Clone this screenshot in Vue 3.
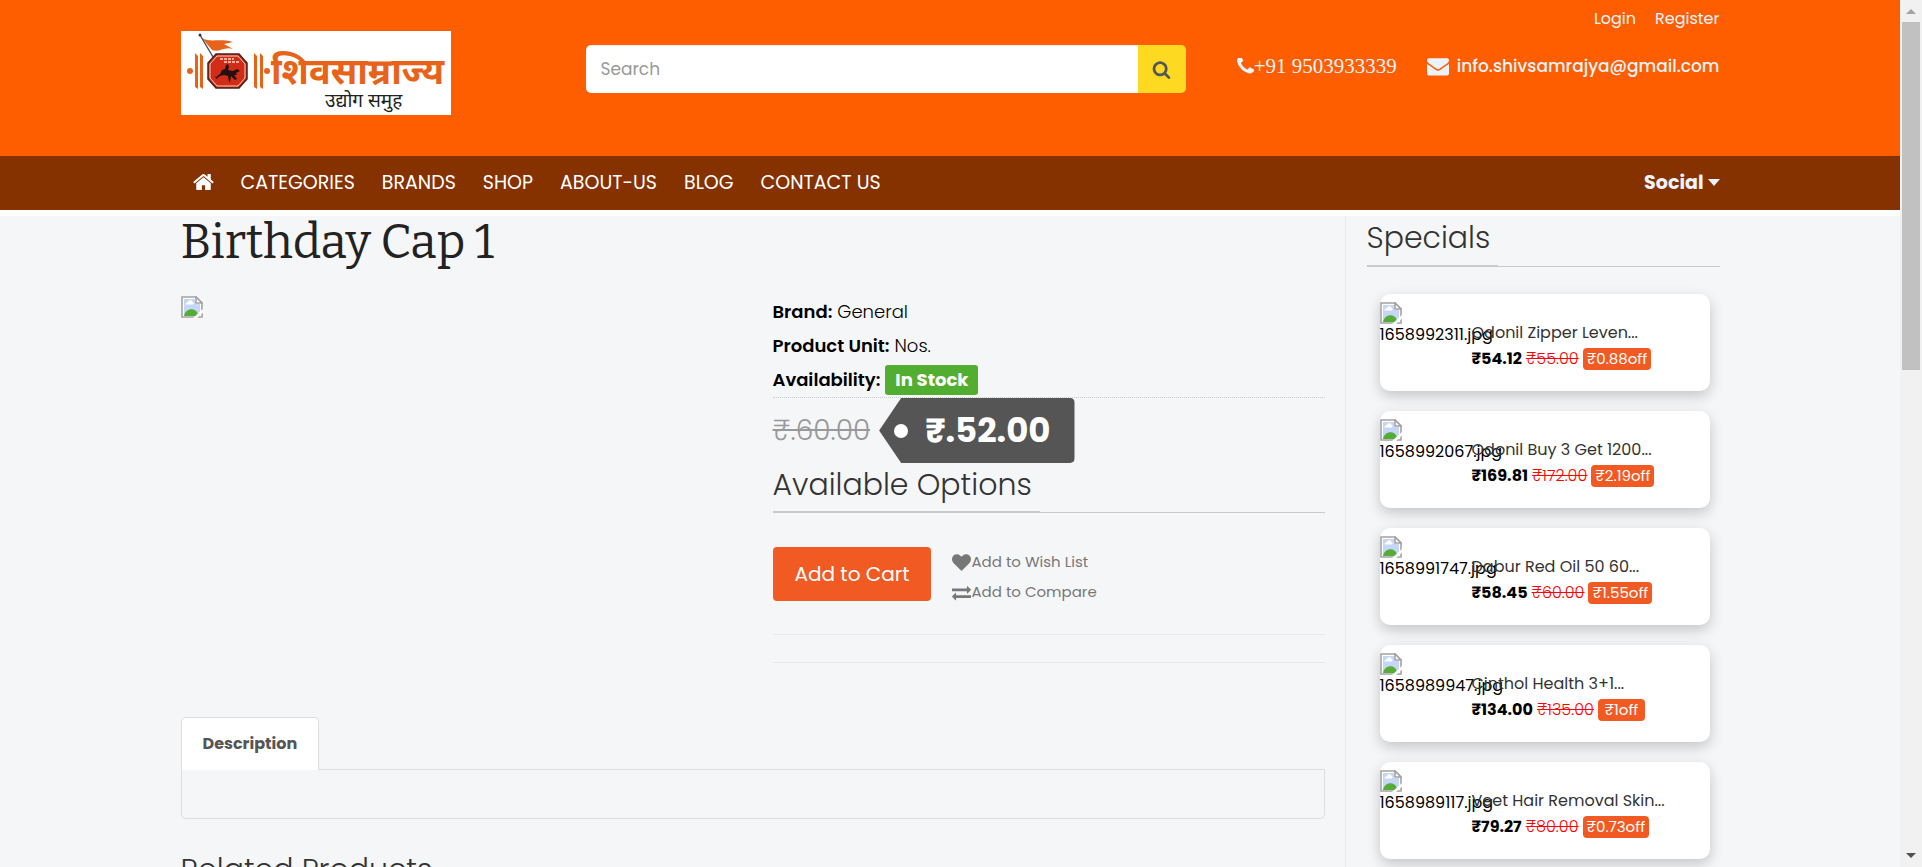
<script setup>
const links = ['CATEGORIES', 'BRANDS', 'SHOP', 'ABOUT-US', 'BLOG', 'CONTACT US']
const specials = [
  { file: '1658992311.jpg', name: 'Odonil Zipper Leven...', price: '₹54.12', old: '₹55.00', off: '₹0.88off' },
  { file: '1658992067.jpg', name: 'Odonil Buy 3 Get 1200...', price: '₹169.81', old: '₹172.00', off: '₹2.19off' },
  { file: '1658991747.jpg', name: 'Dabur Red Oil 50 60...', price: '₹58.45', old: '₹60.00', off: '₹1.55off' },
  { file: '1658989947.jpg', name: 'Cinthol Health 3+1...', price: '₹134.00', old: '₹135.00', off: '₹1off' },
  { file: '1658989117.jpg', name: 'Veet Hair Removal Skin...', price: '₹79.27', old: '₹80.00', off: '₹0.73off' },
]
</script>

<template>
  <svg class="defs" aria-hidden="true">
    <symbol id="missing" viewBox="0 0 22 22">
      <path d="M1 1H15L21 7V21H1Z" fill="#fff" stroke="#a3a3a3" stroke-width="1.600" />
      <path d="M3 3H14V8H19V19H3Z" fill="#c5d6f6" />
      <path d="M4.500 8.500c0-2 2-2 2.500-2.500c.5-2.500 4-2.500 4.500 0c1.500 0 1.500 2.500 0 2.500Z" fill="#fff" />
      <path d="M3 20c1-5 5-7.500 9.500-6.500c3 1 4 3 5 6.500Z" fill="#55ad37" />
      <path d="M15 1V7H21Z" fill="#fff" stroke="#a3a3a3" stroke-width="1.600" />
      <path d="M12 22L22 13V16.500L16 22Z" fill="#fff" />
    </symbol>
  </svg>
  <div class="window">
    <div class="page">
      <header class="top">
        <div class="container top-row">
          <a href="#" class="logo" aria-label="Home page">
            <svg viewBox="0 0 270 84" role="img" aria-label="शिवसाम्राज्य उद्योग समुह">
              <rect width="270" height="84" fill="#fff" />
              <g fill="#e8631a">
                <circle cx="9" cy="40" r="3" /><circle cx="86" cy="40" r="3" />
                <path d="M14 22l3 3v33l-3-2zM19 22l3 3v33l-3-2zM73 22l3 3v33l-3-2zM79 22l3 3v33l-3-2z" />
                <path d="M21 7C29 12 38 7 52 11L43 13L52 18C43 15 38 22 31 19Z" />
              </g>
              <path d="M19 4L32 26" stroke="#4a4a50" stroke-width="1.400" /><circle cx="19" cy="4" r="1.500" fill="#333" />
              <path d="M35 23H58L66 32V48L58 57H35L27 48V32Z" fill="#c92a1b" stroke="#4e2018" stroke-width="1.500" />
              <path d="M36 25H57L64 33V47L57 55H36L29 47V33Z" fill="#d22c17" stroke="#f5d1b5" stroke-width="1" />
              <path d="M39 28H53M43 31H58" stroke="#ffd5c6" stroke-width="1.600" stroke-dasharray="3 1" />
              <path d="M34 47l5-4 2-4 3-1 1-4 2-1 1 3-1 3 5 1 4-2 3 2-4 2 1 2-3 0 3 4-2 1-4-4-1 6-1 0-1-6-4-1-4 1-4 3 0-3-1 2Z" fill="#24100d" />
              <text class="brand-name" x="90" y="53">शिवसाम्राज्य</text>
              <text class="brand-sub" x="144" y="76">उद्योग समुह</text>
            </svg>
          </a>
          <form class="search" @submit.prevent>
            <input type="search" placeholder="Search" aria-label="Search" />
            <button aria-label="Search">
              <svg viewBox="0 0 1792 1792"><path d="M1216 832q0-185-131.500-316.500t-316.500-131.500-316.500 131.500-131.500 316.500 131.500 316.500 316.500 131.500 316.500-131.500 131.500-316.500zm512 832q0 52-38 90t-90 38q-54 0-90-38l-343-342q-179 124-399 124-143 0-273.500-55.500t-225-150-150-225-55.500-273.500 55.500-273.500 150-225 225-150 273.500-55.500 273.500 55.500 225 150 150 225 55.500 273.500q0 220-124 399l343 343q37 37 37 90z" /></svg>
            </button>
          </form>
          <div class="reach">
            <div class="account"><a href="#">Login</a><a href="#">Register</a></div>
            <div class="contact">
              <a href="#" class="phone">
                <svg viewBox="192 256 1408 1408"><path d="M1600 1240q0 27-10 70.500t-21 68.500q-21 50-122 106-94 51-186 51-27 0-53-3.500t-57.500-12.500-47-14.500-55.500-20.500-49-18q-98-35-175-83-127-79-264-216t-216-264q-48-77-83-175-3-9-18-49t-20.500-55.500-14.500-47-12.500-57.500-3.500-53q0-92 51-186 56-101 106-122 25-11 68.500-21t70.500-10q14 0 21 3 18 6 53 76 11 19 30 54t35 63.500 31 53.500q3 4 17.500 25t21.500 35.500 7 28.500q0 20-28.500 50t-62 55-62 53-28.500 46q0 9 5 22.500t8.500 20.500 14 24 11.500 19q76 137 174 235t235 174q2 1 19 11.500t24 14 20.500 8.500 22.500 5q18 0 46-28.500t53-62 55-62 50-28.500q14 0 28.500 7t35.500 21.500 25 17.500q25 15 53.500 31t63.500 35 54 30q70 35 76 53 3 7 3 21z" /></svg>
                <span>+91 9503933339</span>
              </a>
              <a href="#" class="mail">
                <svg viewBox="0 0 1792 1792"><path d="M1792 710v794q0 66-47 113t-113 47h-1472q-66 0-113-47t-47-113v-794q44 49 101 87 362 246 497 345 57 42 92.500 65.500t94.500 48 110 24.500h2q51 0 110-24.500t94.500-48 92.500-65.500q170-123 498-345 57-39 100-87zm0-294q0 79-49 151t-122 123q-376 261-468 325-10 7-42.500 31t-54 38.500-52 32.500-57.500 27-50 9h-2q-23 0-50-9t-57.500-27-52-32.500-54-38.500-42.500-31q-91-64-262-182.500t-205-142.500q-62-42-117-115.500t-55-136.500q0-78 41.500-130t118.500-52h1472q65 0 112.500 47t47.500 113z" /></svg>
                <span>info.shivsamrajya@gmail.com</span>
              </a>
            </div>
          </div>
        </div>
      </header>
      <nav class="nav">
        <div class="container nav-row">
          <a href="#" class="home" aria-label="Home">
            <svg viewBox="64 192 1664 1408"><path d="M1472 992v480q0 26-19 45t-45 19h-384v-384h-256v384h-384q-26 0-45-19t-19-45v-480q0-1 .5-3t.5-3l575-474 575 474q1 2 1 6zm223-69l-62 74q-8 9-21 11h-3q-13 0-21-7l-692-577-692 577q-12 8-24 7-13-2-21-11l-62-74q-8-10-7-23.500t11-21.500l719-599q32-26 76-26t76 26l244 204v-195q0-14 9-23t23-9h192q14 0 23 9t9 23v408l219 182q10 8 11 21.500t-7 23.500z" /></svg>
          </a>
          <a v-for="l in links" :key="l" href="#">{{ l }}</a>
          <button class="social">Social<i class="caret"></i></button>
        </div>
      </nav>
      <div class="strip"></div>
      <div class="container body">
        <main>
          <h1>Birthday Cap 1</h1>
          <div class="product">
            <div class="photo"><svg class="missing" role="img" aria-label="Product photo"><use href="#missing" /></svg></div>
            <section class="info">
              <ul class="facts">
                <li><b>Brand:</b> General</li>
                <li><b>Product Unit:</b> Nos.</li>
                <li><b>Availability:</b> <span class="stock">In Stock</span></li>
              </ul>
              <div class="prices">
                <del>₹.60.00</del>
                <div class="tag"><i></i><span>₹.52.00</span></div>
              </div>
              <h2><span>Available Options</span></h2>
              <div class="buy">
                <button class="cart">Add to Cart</button>
                <div class="extras">
                  <a href="#"><svg viewBox="0 0 1792 1792"><path d="M896 1664q-26 0-44-18l-624-602q-10-8-27.500-26t-55.500-65.500-68-97.500-53.500-121-23.500-138q0-220 127-344t351-124q62 0 126.500 21.500t120 58 95.500 68.500 76 68q36-36 76-68t95.500-68.500 120-58 126.500-21.500q224 0 351 124t127 344q0 221-229 450l-623 600q-18 18-44 18z" /></svg>Add to Wish List</a>
                  <a href="#"><svg viewBox="0 0 1792 1792"><path d="M1792 1184v192q0 13-9.500 22.500t-22.500 9.500h-1376v192q0 13-9.500 22.500t-22.500 9.500q-12 0-24-10l-319-320q-9-9-9-22 0-14 9-23l320-320q9-9 23-9 13 0 22.500 9.500t9.500 22.500v192h1376q13 0 22.500 9.500t9.500 22.500zm0-544q0 14-9 23l-320 320q-9 9-23 9-13 0-22.500-9.500t-9.500-22.500v-192h-1376q-13 0-22.500-9.500t-9.500-22.500v-192q0-13 9.500-22.500t22.500-9.500h1376v-192q0-14 9-23t23-9q12 0 24 10l319 319q9 9 9 23z" /></svg>Add to Compare</a>
                </div>
              </div>
              <hr /><hr />
            </section>
          </div>
          <div class="tabs"><button class="tab">Description</button></div>
          <div class="panel"></div>
          <h2 class="related"><span>Related Products</span></h2>
        </main>
        <aside>
          <h2><span>Specials</span></h2>
          <article v-for="s in specials" :key="s.file" class="card">
            <div class="thumb"><svg class="missing" aria-hidden="true"><use href="#missing" /></svg><span>{{ s.file }}</span></div>
            <div class="text">
              <a href="#" class="name">{{ s.name }}</a>
              <div class="cost"><b>{{ s.price }}</b><del>{{ s.old }}</del><span class="off">{{ s.off }}</span></div>
            </div>
          </article>
        </aside>
      </div>
    </div>
    <div class="scrollbar" aria-hidden="true"><i class="up"></i><i class="thumb-bar"></i><i class="down"></i></div>
  </div>
</template>

<style>
body { margin: 0; overflow: hidden; }
</style>

<style scoped>
* { box-sizing: border-box; }
.defs { display: none; }
.window { display: flex; height: 100vh; font-family: Poppins, Inter, "Noto Sans", sans-serif; font-size: 16px; color: #000; }
.page { flex: 1; min-width: 0; background: #f5f6f8; overflow: hidden; }
.container { width: 81%; margin: 0 auto; }
a { color: inherit; text-decoration: none; }
button { border: 0; padding: 0; font: inherit; cursor: pointer; }
svg { fill: currentColor; flex: none; }

.top { background: #ff5e00; height: 156px; color: #ebf4fc; }
.top-row { display: flex; align-items: flex-start; }
.logo { display: block; width: 270px; height: 84px; margin-top: 31px; }
.logo svg { display: block; width: 270px; height: 84px; }
.brand-name { font: 700 36px "Noto Sans Devanagari", "Noto Sans", sans-serif; fill: #e8631a; }
.brand-sub { font: 400 19px "Noto Sans Devanagari", "Noto Sans", sans-serif; fill: #222; }
.search { display: flex; width: 600px; height: 48px; margin: 45px 0 0 135px; }
.search input { flex: 1; min-width: 0; border: 0; border-radius: 5px 0 0 5px; padding: 0 15px; font: inherit; font-size: 17px; background: #fff; box-shadow: inset 0 1px 1px rgba(0, 0, 0, .075); }
.search input::placeholder { color: #999; }
.search button { width: 48px; border-radius: 0 5px 5px 0; background: #fdd922; color: #555; display: grid; place-items: center; }
.search svg { width: 19px; height: 19px; }
.reach { margin-left: auto; }
.account { display: flex; justify-content: flex-end; gap: 19px; padding-top: 7px; line-height: 24px; }
.contact { display: flex; gap: 30px; padding-top: 22px; line-height: 26px; }
.phone, .mail { display: flex; align-items: center; }
.phone { font-family: "Liberation Serif", serif; font-size: 21px; }
.phone svg { width: 17px; height: 17px; }
.mail { font-size: 17px; font-weight: 500; }
.mail svg { width: 22px; height: 22px; margin-right: 8px; }

.nav { background: #853200; color: #fff; }
.nav-row { display: flex; align-items: center; gap: 27px; height: 54px; padding-bottom: 2px; font-size: 19px; }
.home { margin-left: 12px; }
.home svg { display: block; width: 21px; height: 18px; }
.social { display: flex; align-items: center; gap: 4px; margin-left: auto; background: none; color: #ebf4fc; font-weight: 700; }
.caret { border: 6px solid transparent; border-top: 7px solid; border-bottom: 0; }
.strip { height: 6px; background: #fff; }

.body { display: flex; }
main { flex: 1; min-width: 0; padding-right: 20px; }
h1 { margin: 0; font: 400 48px/52px Bitter, "Liberation Serif", serif; color: #222; }
h2 { display: flex; margin: 0; border-bottom: 1px solid #c9cacc; font-size: 30px; font-weight: 300; line-height: 36px; color: #333; }
h2 span { border-bottom: 1px solid #c9cacc; padding: 0 8px 9px 0; }
.product { display: grid; grid-template-columns: 1fr 552px; margin-top: 27px; }
.photo { padding-top: 1px; }
.missing { display: block; width: 22px; height: 22px; }
.facts { list-style: none; margin: 0; padding: 0; font-size: 18px; font-weight: 300; line-height: 34px; border-bottom: 1px dotted #ccc; }
.facts b { font-weight: 600; }
.stock { display: inline-block; padding: 0 10px; line-height: 30px; border-radius: 3px; background: #52ae30; color: #fff; font-weight: 700; }
.prices { display: flex; align-items: center; gap: 9px; font-size: 28px; font-weight: 300; color: #999; }
.tag { display: flex; align-items: center; height: 65px; padding: 0 24px 0 15px; gap: 17px; border-radius: 0 5px 5px 0; background: #555; color: #fff; font-size: 34px; font-weight: 700; clip-path: polygon(22px 0, 100% 0, 100% 100%, 22px 100%, 0 50%); }
.tag i { width: 14px; height: 14px; border-radius: 50%; background: #fff; }
.info h2 { padding-top: 4px; }
.info h2 span { padding-bottom: 8px; }
.buy { display: flex; gap: 21px; margin-top: 34px; padding-bottom: 27px; }
.cart { height: 54px; padding: 0 22px; border-radius: 4px; background: #f15a23; color: #fff; font-size: 20px; }
.extras { display: grid; font-size: 15px; line-height: 30px; color: #777; }
.extras a { display: flex; align-items: center; }
.extras svg { width: 19px; height: 19px; }
hr { border: 0; border-top: 1px solid #e7e8ea; margin: 0 0 27px; }
.tabs { display: flex; margin-top: 27px; }
.tab { height: 53px; padding: 0 21px 2px; border: 1px solid #ddd; border-bottom: 0; border-radius: 5px 5px 0 0; background: #fff; color: #555; font-weight: 700; margin-bottom: -1px; z-index: 1; }
.panel { height: 50px; border: 1px solid #ddd; border-radius: 0 0 5px 5px; }
.related { margin-top: 33px; }

aside { width: 375px; padding-left: 21px; border-left: 1px solid #e9eaec; }
aside h2 { padding-top: 4px; margin-bottom: 27px; }
.card { display: grid; grid-template-columns: 92px 1fr; height: 97px; margin: 0 10px 20px 13px; border-radius: 10px; background: #fff; box-shadow: 0 5px 14px rgba(0, 0, 0, .2); white-space: nowrap; }
.thumb { padding-top: 8px; line-height: 22px; }
.text { padding-top: 24px; }
.name { display: block; line-height: 30px; color: #333; }
.cost { display: flex; align-items: center; gap: 4px; line-height: 22px; }
.cost b { font-weight: 700; }
.cost del { color: #f00; font-weight: 300; }
.off { min-width: 47px; padding: 0 4px; border-radius: 4px; background: #f15a23; color: #fff; font-size: 15px; text-align: center; }

.scrollbar { display: flex; flex-direction: column; align-items: center; width: 22px; padding: 9px 0; background: #f1f1f1; }
.up { border: 5px solid transparent; border-top: 0; border-bottom: 5px solid #a3a3a3; }
.thumb-bar { width: 18px; height: 41%; margin-top: 8px; background: #c1c1c1; }
.down { margin-top: auto; border: 5px solid transparent; border-bottom: 0; border-top: 5px solid #505050; }
</style>
